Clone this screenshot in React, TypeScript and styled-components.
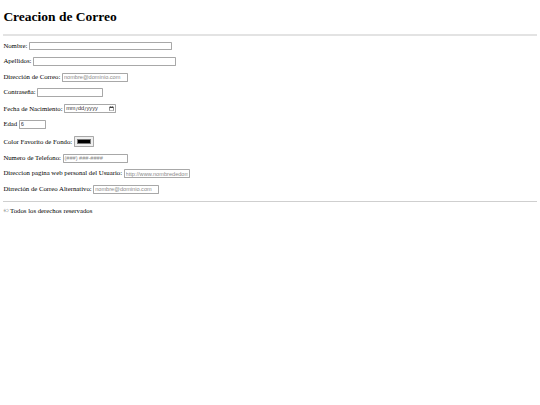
import styled, { createGlobalStyle } from 'styled-components';

const GlobalStyle = createGlobalStyle`
  body {
    margin: 0;
    background: #fff;
  }
`;

// the reference is a 1280px page shown at 540px, so everything below is
// written at full size and zoomed down
const Page = styled.div`
  zoom: 0.421875;
  padding: 8px;
  font-family: 'Liberation Serif', serif;
  font-size: 16px;
  color: #000;
`;

const Header = styled.header`
  border-bottom: 5px solid #e3e3e3;
`;

const Title = styled.h1`
  font-size: 32px;
  font-weight: 700;
  margin: 14px 0 21px;
`;

const Form = styled.form`
  margin: 0;
`;

const Row = styled.p`
  margin: 16px 0;
  &:first-child {
    margin-top: 13px;
  }
`;

const Field = styled.input<{ $w?: number }>`
  box-sizing: border-box;
  width: ${(p) => p.$w ?? 156}px;
  border: 2px solid #a8a8a8;
  border-radius: 2px;
  font-family: 'Liberation Sans', Arial, sans-serif;
  font-size: 13.33px;
  color: #333;
  &::placeholder {
    color: #8a8a8a;
  }
`;

const Rule = styled.hr`
  margin: 8px 0;
  border: 0;
  border-top: 2px solid #cfcfcf;
`;

const Footer = styled.footer`
  margin: 14px 0;
`;

export default function App() {
  return (
    <>
      <GlobalStyle />
      <Page>
        <Header>
          <Title>Creacion de Correo</Title>
        </Header>
        <Form>
          <Row>
            Nombre: <Field type="text" $w={339} />
          </Row>
          <Row>
            Apellidos: <Field type="text" $w={339} />
          </Row>
          <Row>
            Dirección de Correo: <Field type="email" placeholder="nombre@dominio.com" />
          </Row>
          <Row>
            Contraseña: <Field type="password" />
          </Row>
          <Row>
            Fecha de Nacimiento: <Field type="date" $w={123} />
          </Row>
          <Row>
            Edad <Field type="number" defaultValue={6} $w={64} />
          </Row>
          <Row>
            Color Favorito de Fondo: <Field type="color" defaultValue="#000000" $w={48} />
          </Row>
          <Row>
            Numero de Telefono: <Field type="tel" placeholder="(###) ###-####" />
          </Row>
          <Row>
            Direccion pagina web personal del Usuario:{' '}
            <Field type="url" placeholder="http://www.nombrededominio.com" />
          </Row>
          <Row>
            Dirreción de Correo Alternativo:{' '}
            <Field type="email" placeholder="nombre@dominio.com" />
          </Row>
        </Form>
        <Rule />
        <Footer>© Todos los derechos reservados</Footer>
      </Page>
    </>
  );
}
